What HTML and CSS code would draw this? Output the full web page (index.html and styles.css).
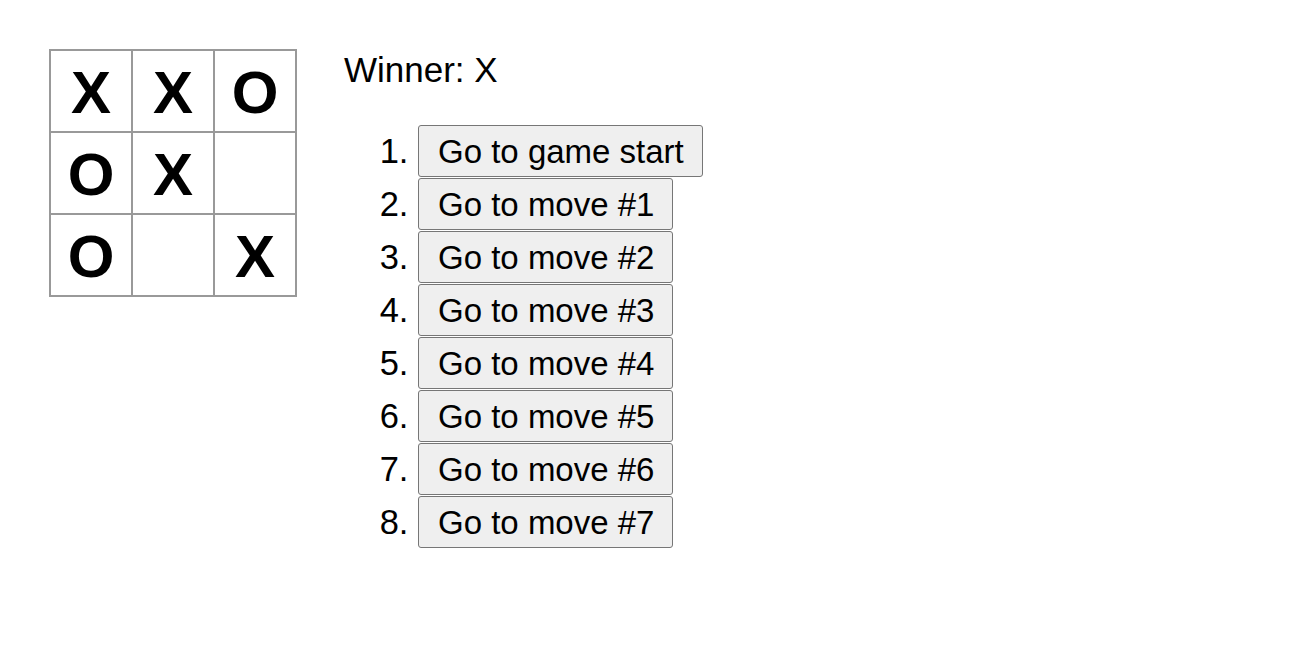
FILE: index.html
```html
<!DOCTYPE html>
<html lang="en">
<head>
<meta charset="utf-8">
<title>Tic-Tac-Toe</title>
<link rel="stylesheet" href="styles.css">
</head>
<body>
<div class="game">
  <div class="game-board">
    <div class="board-row">
      <div class="square">X</div>
      <div class="square">X</div>
      <div class="square">O</div>
    </div>
    <div class="board-row">
      <div class="square">O</div>
      <div class="square">X</div>
      <div class="square"></div>
    </div>
    <div class="board-row">
      <div class="square">O</div>
      <div class="square"></div>
      <div class="square">X</div>
    </div>
  </div>
  <div class="game-info">
    <div class="status">Winner: X</div>
    <ol class="moves">
      <li><button class="move">Go to game start</button></li>
      <li><button class="move">Go to move #1</button></li>
      <li><button class="move">Go to move #2</button></li>
      <li><button class="move">Go to move #3</button></li>
      <li><button class="move">Go to move #4</button></li>
      <li><button class="move">Go to move #5</button></li>
      <li><button class="move">Go to move #6</button></li>
      <li><button class="move">Go to move #7</button></li>
    </ol>
  </div>
</div>
</body>
</html>
```

FILE: styles.css
```css
html, body {
  background: #fff;
}
body {
  margin: 0;
  font-family: "Liberation Sans", Arial, sans-serif;
  color: #000;
}
.game {
  display: flex;
  flex-direction: row;
  align-items: flex-start;
  padding: 51px 0 0 49px;
}
.game-board {
  display: flex;
  flex-direction: column;
}
.board-row {
  display: flex;
}
.square {
  box-sizing: border-box;
  width: 84px;
  height: 84px;
  margin-right: -2px;
  margin-top: -2px;
  border: 2px solid #999;
  background: #fff;
  font-size: 60px;
  font-weight: bold;
  line-height: 84px;
  text-align: center;
}
.game-info {
  margin-left: 49px;
  margin-top: -1px;
}
.status {
  font-size: 35px;
}
.moves {
  margin: 35px 0 0 0;
  padding-left: 74px;
  font-size: 34.5px;
}
.moves li {
  margin-bottom: 1px;
}
.move {
  box-sizing: border-box;
  height: 52px;
  padding: 1px 18px 0 19px;
  border: 1px solid #767676;
  border-radius: 3px;
  background: #efefef;
  color: #000;
  font-family: "Liberation Sans", Arial, sans-serif;
  font-size: 33px;
}
```
